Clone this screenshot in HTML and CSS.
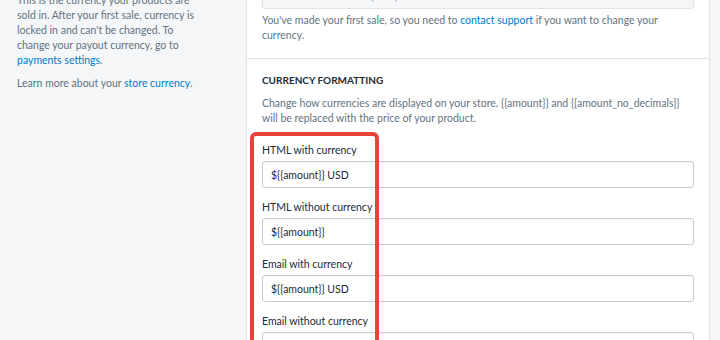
FILE: index.html
```html
<!DOCTYPE html>
<html lang="en">
<head>
    <meta charset="UTF-8">
    <meta name="viewport" content="width=device-width, initial-scale=1.0">
    <title>General settings - Store currency</title>
    <link rel="stylesheet" href="styles.css">
</head>
<body>
    <div class="layout">
        <div class="annotation">
            <h2 class="annotation-title">Store currency</h2>
            <p>This is the currency your products are sold in. After your first sale, currency is locked in and can't be changed. To change your payout currency, go to <a href="#">payments settings</a>.</p>
            <p>Learn more about your <a href="#">store currency</a>.</p>
        </div>

        <div class="card">
            <div class="card-section">
                <label class="field-label" for="currency">Store currency</label>
                <input type="text" id="currency" class="form-input" value="United States Dollars (USD)" disabled>
                <p class="help-text">You've made your first sale, so you need to <a href="#">contact support</a> if you want to change your currency.</p>
            </div>

            <div class="card-section">
                <h3 class="subheading">Currency formatting</h3>
                <p class="help-text">Change how currencies are displayed on your store. {{amount}} and {{amount_no_decimals}} will be replaced with the price of your product.</p>

                <div class="format-fields">
                    <div class="highlight"></div>

                    <div class="form-group">
                        <label class="field-label" for="htmlWith">HTML with currency</label>
                        <input type="text" id="htmlWith" class="form-input" value="${{amount}} USD">
                    </div>

                    <div class="form-group">
                        <label class="field-label" for="htmlWithout">HTML without currency</label>
                        <input type="text" id="htmlWithout" class="form-input" value="${{amount}}">
                    </div>

                    <div class="form-group">
                        <label class="field-label" for="emailWith">Email with currency</label>
                        <input type="text" id="emailWith" class="form-input" value="${{amount}} USD">
                    </div>

                    <div class="form-group">
                        <label class="field-label" for="emailWithout">Email without currency</label>
                        <input type="text" id="emailWithout" class="form-input" value="${{amount}}">
                    </div>
                </div>
            </div>
        </div>
    </div>
</body>
</html>
```

FILE: styles.css
```css
* {
    margin: 0;
    padding: 0;
    box-sizing: border-box;
}

body {
    font-family: Lato, 'Open Sans', Arial, sans-serif;
    font-size: 10.5px;
    line-height: 15px;
    color: #212b36;
    background: #f4f6f8;
    overflow: hidden;
}

a {
    color: #007ace;
    text-decoration: none;
}

.layout {
    display: flex;
    align-items: flex-start;
    margin-top: -51px;
}

.annotation {
    width: 247px;
    padding: 15px 50px 0 17px;
    color: #637381;
}

.annotation-title {
    font-size: 12px;
    line-height: 18px;
    font-weight: 700;
    color: #212b36;
    margin-bottom: 11px;
}

.annotation p {
    margin-bottom: 8px;
}

.card {
    width: 462px;
    background: white;
    border-radius: 3px;
    box-shadow: 0 0 0 1px rgba(63, 63, 68, 0.05), 0 1px 3px rgba(63, 63, 68, 0.15);
}

.card-section {
    padding: 15px;
}

.card-section + .card-section {
    border-top: 1px solid #dfe3e8;
}

.field-label {
    display: block;
    margin-bottom: 3px;
}

.form-input {
    display: block;
    width: 100%;
    height: 27px;
    padding: 0 8px;
    border: 1px solid #c4cdd5;
    border-radius: 3px;
    font-family: inherit;
    font-size: 10.5px;
    color: #212b36;
    background: white;
    box-shadow: inset 0 1px 0 0 rgba(99, 115, 129, 0.05);
}

.form-input:disabled {
    background: #f4f6f8;
    border-color: #dfe3e8;
    color: #919eab;
}

.help-text {
    color: #637381;
    margin-top: 4px;
}

.subheading {
    font-size: 10px;
    line-height: 12px;
    font-weight: 700;
    text-transform: uppercase;
    margin-bottom: 10px;
}

.subheading + .help-text {
    margin-top: 0;
}

.format-fields {
    position: relative;
    margin-top: 17px;
}

.form-group {
    margin-bottom: 12px;
}

.highlight {
    position: absolute;
    left: -12px;
    top: -11px;
    width: 129px;
    height: 320px;
    border: 4px solid #e8423a;
    border-radius: 6px;
}
```
